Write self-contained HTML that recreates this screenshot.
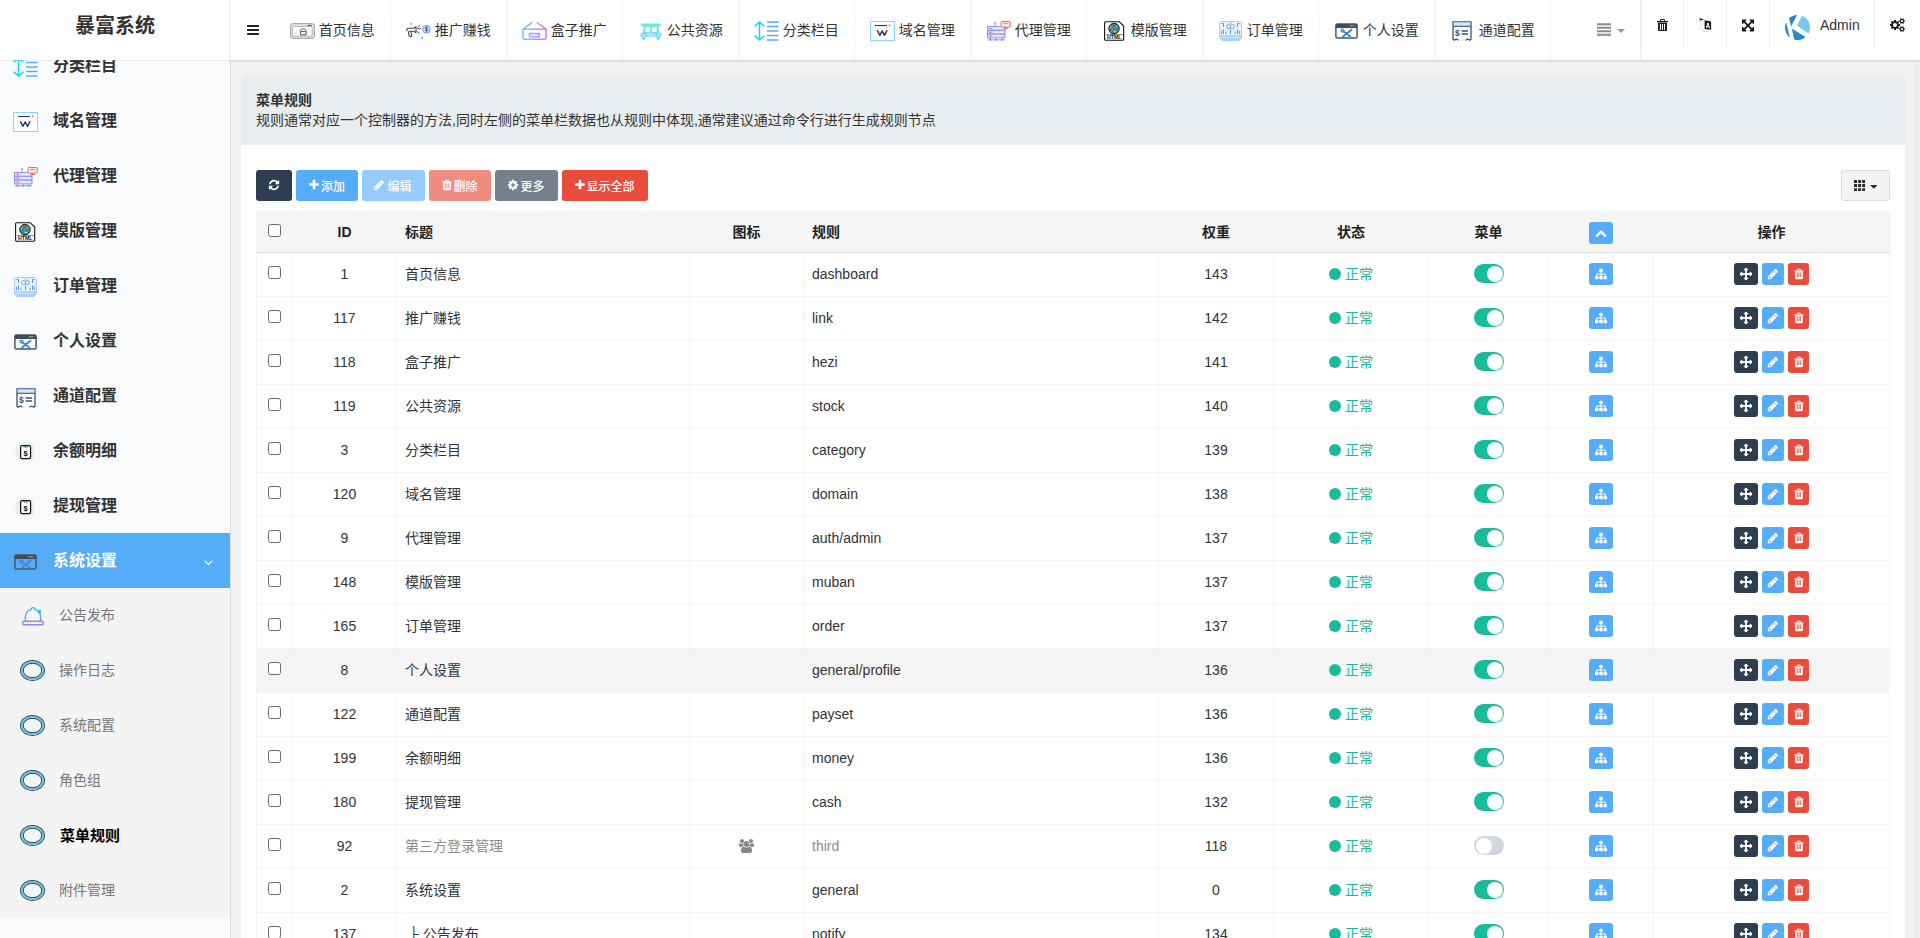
<!DOCTYPE html>
<html lang="zh-CN">
<head>
<meta charset="utf-8">
<title>暴富系统</title>
<style>
*{box-sizing:border-box;margin:0;padding:0}
html,body{width:1920px;height:938px;overflow:hidden}
body{font-family:"Liberation Sans","Noto Sans CJK SC",sans-serif;font-size:14px;color:#333;background:#f2f2f2;position:relative}
svg{display:block}
/* header */
#hd{position:absolute;left:0;top:0;width:1920px;height:60px;background:#fff;z-index:10}
#hdsh{position:absolute;left:230px;top:0;width:1690px;height:60px;box-shadow:0 1px 2px rgba(0,0,0,.16);z-index:9;background:#fff}
#hdl{position:absolute;left:0;top:60px;width:230px;height:1px;background:rgba(0,0,0,.05);z-index:11}
#logo{position:absolute;left:0;top:0;width:230px;height:60px;text-align:center;font-size:20px;font-weight:bold;line-height:52px;color:#333}
#hd .vl{position:absolute;top:0;width:1px;background:#eee}
#admin{position:absolute;left:1820px;top:16px;font-size:14px;line-height:18px;color:#333}
#burger{position:absolute;left:246px;top:23px;fill:#222}
.nv{position:absolute;top:0;height:60px;width:116px;border-right:1px solid #f0f0f0;color:#333;font-size:14px;line-height:60px}
.nv span{position:absolute;left:43.8px;top:0;white-space:nowrap}
.nv svg{position:absolute}
/* sidebar */
#sb{position:absolute;left:0;top:60px;width:231px;height:878px;background:#f9fafc;border-right:1px solid #d9dce3;overflow:hidden}
.mi{position:absolute;left:0;width:230px;height:55px;font-size:16px;font-weight:bold;color:#333;line-height:55px}
.mi span{position:absolute;left:53px;top:0;white-space:nowrap}
.mi svg{position:absolute}
.mi.act{background:#55acf8;color:#fff}
#sub{position:absolute;left:0;top:528px;width:230px;height:330px;background:#f4f4f5}
.si{position:absolute;left:0;width:230px;height:55px;font-size:14px;color:#777;line-height:55px}
.si span{position:absolute;left:59px;top:0;white-space:nowrap}
.si svg{position:absolute}
.si.cur{color:#000;font-weight:bold;font-size:15px}
.si.cur span{left:60px}
/* content */
#panel{position:absolute;left:241px;top:75px;width:1664px;height:900px;background:#fff;border-radius:3px 3px 0 0}
#ph{position:absolute;left:0;top:0;width:1664px;height:70px;background:#e8edf0;border-radius:3px 3px 0 0}
#ph b{position:absolute;left:15px;top:17px;font-size:14px;line-height:16px;color:#333}
#ph p{position:absolute;left:15px;top:37px;font-size:14px;line-height:16px;color:#333;white-space:nowrap}
.btn{position:absolute;top:95px;height:31px;border-radius:3px;color:#fff;font-size:12px;line-height:31px;white-space:nowrap}
.btn svg{position:absolute}
.btn span{position:absolute;top:1.5px;margin-left:-.5px;font-weight:500}
#colbtn{position:absolute;left:1600px;top:95px;width:49px;height:31px;border:1px solid #ddd;border-radius:3px;background:#f4f4f4}
#colbtn svg{position:absolute}
#scroll{position:absolute;left:1915px;top:60px;width:5px;height:878px;background:#e9edf2}
/* table */
#tb{position:absolute;left:15px;top:136px;width:1634px;border-collapse:separate;border-spacing:0;table-layout:fixed;font-size:14px;color:#333;border-left:1px solid #f1f1f1;line-height:20px}
#tb th{height:42px;background:#f5f5f5;border-right:1px solid #f0f0f0;border-bottom:1px solid #ddd;font-weight:bold;color:#222;text-align:center;padding:0 8px;vertical-align:middle}
#tb td{height:44px;border-right:1px solid #f4f4f4;border-bottom:1px solid #f4f4f4;padding:0 8px 1px;vertical-align:middle;white-space:nowrap;overflow:hidden}
#tb .c{text-align:center}
#tb .t{text-align:left}
#tb tr.hover td{background:#f5f5f5}
#tb tr.muted td.t{color:#8c8c8c}
.cb{display:block;width:13px;height:13px;border:1px solid #6b6b6b;border-radius:2.5px;background:#fff;margin:0 auto;position:relative;top:-1.5px}
th .cb{top:-1px}
.st{color:#18bc9c;display:flex;justify-content:center;align-items:center;height:20px;white-space:nowrap}
.st i{display:block;width:12px;height:12px;border-radius:50%;background:#18bc9c;margin-right:4px}
.sw{display:block;width:30px;height:19px;border-radius:9.5px;position:relative;margin:0 auto;top:-.5px;left:.5px}
.sw.on{background:#18bc9c}
.sw.off{background:#d2d6de}
.sw i{position:absolute;top:1.5px;width:16px;height:16px;border-radius:50%;background:#fff}
.sw.on i{right:1.5px}
.sw.off i{left:1.5px}
.bxs{display:flex;justify-content:center;gap:4px;height:22px}
.bx{display:block;height:22px;border-radius:3px;position:relative}
.bx svg{position:absolute;left:50%;top:50%;transform:translate(-50%,-50%);fill:#fff}
.bx-blue{background:#55acf8}
.bx-dark{background:#2c3e50}
.bx-red{background:#e74c3c}
th .bxs{position:relative;top:1.5px}
.fa{display:block;margin:0 auto;fill:#878787}
</style>
</head>
<body>
<svg width="0" height="0" style="position:absolute">
<defs>
<symbol id="h-lang" viewBox="0 0 13 14"><path d="M.7 0l4.2 1.5L.7 2.700z" fill="#2a2018"/><rect x="-.4" y="3.1" width="5.9" height="8.6" fill="#fdfcff" stroke="#d9d3ef" stroke-width=".6"/><path d="M1.6 6.6c1 .6 2 .2 2.6-1M2.9 4.700v1M1.7 8.500l2 1.3" stroke="#d5cfe6" stroke-width=".6" fill="none"/><path d="M5.7 2.200l6.4 1.200v8.400l-6.4-.8z" fill="#15151f"/><path d="M7.3 9.900l1.6-5.1 1.6 5.500M7.8 8.500l2.4.4" stroke="#fff" stroke-width="1" fill="none"/><path d="M3 13.300h5.600l.9-.8" stroke="#c8c8c8" stroke-width=".7" fill="none"/></symbol>
<symbol id="h-trash" viewBox="0 0 11 12.5"><path fill-rule="evenodd" d="M3.6 0h3.8l.9 1.9H11v1.3H0V1.9h2.7zM4.2 1l-.4.9h3.4L6.8 1zM1 3.8h9v7.3a1.4 1.4 0 0 1-1.4 1.4H2.4A1.4 1.4 0 0 1 1 11.1zM2.9 5v6h1.1V5zM4.95 5v6h1.1V5zM7 5v6h1.1V5z"/></symbol>
<symbol id="fa-arrows" viewBox="0 0 1792 1792"><path d="M1792 896q0 26-19 45l-256 256q-19 19-45 19t-45-19-19-45v-128h-384v384h128q26 0 45 19t19 45-19 45l-256 256q-19 19-45 19t-45-19l-256-256q-19-19-19-45t19-45 45-19h128v-384h-384v128q0 26-19 45t-45 19-45-19l-256-256q-19-19-19-45t19-45l256-256q19-19 45-19t45 19 19 45v128h384v-384h-128q-26 0-45-19t-19-45 19-45l256-256q19-19 45-19t45 19l256 256q19 19 19 45t-19 45-45 19h-128v384h384v-128q0-26 19-45t45-19 45 19l256 256q19 19 19 45z"/></symbol>
<symbol id="fa-pencil" viewBox="0 0 1792 1792"><path d="M491 1536l91-91-235-235-91 91v107h128v128h107zm523-928q0-22-22-22-10 0-17 7l-542 542q-7 7-7 17 0 22 22 22 10 0 17-7l542-542q7-7 7-17zm-54-192l416 416-832 832h-416v-416zm683 96q0 53-37 90l-166 166-416-416 166-165q36-38 90-38 53 0 91 38l235 234q37 39 37 91z"/></symbol>
<symbol id="fa-trash" viewBox="0 0 1792 1792"><path d="M704 1376v-704q0-14-9-23t-23-9h-64q-14 0-23 9t-9 23v704q0 14 9 23t23 9h64q14 0 23-9t9-23zm256 0v-704q0-14-9-23t-23-9h-64q-14 0-23 9t-9 23v704q0 14 9 23t23 9h64q14 0 23-9t9-23zm256 0v-704q0-14-9-23t-23-9h-64q-14 0-23 9t-9 23v704q0 14 9 23t23 9h64q14 0 23-9t9-23zm-544-992h448l-48-117q-7-9-17-11h-317q-10 2-17 11zm928 32v64q0 14-9 23t-23 9h-96v948q0 83-47 143.500t-113 60.500h-832q-66 0-113-58.500t-47-141.500v-952h-96q-14 0-23-9t-9-23v-64q0-14 9-23t23-9h309l70-167q15-37 54-63t79-26h320q40 0 79 26t54 63l70 167h309q14 0 23 9t9 23z"/></symbol>
<symbol id="fa-refresh" viewBox="0 0 1792 1792"><path d="M1639 1056q0 5-1 7-64 268-268 434.500t-478 166.500q-146 0-282.500-55t-243.500-157l-129 129q-19 19-45 19t-45-19-19-45v-448q0-26 19-45t45-19h448q26 0 45 19t19 45-19 45l-137 137q71 66 161 102t187 36q134 0 250-65t186-179q11-17 53-117 8-23 30-23h192q13 0 22.500 9.500t9.500 22.500zm25-800v448q0 26-19 45t-45 19h-448q-26 0-45-19t-19-45 19-45l138-138q-148-137-349-137-134 0-250 65t-186 179q-11 17-53 117-8 23-30 23h-199q-13 0-22.500-9.500t-9.500-22.500v-7q65-268 270-434.500t480-166.500q146 0 284 55.500t245 156.500l130-129q19-19 45-19t45 19 19 45z"/></symbol>
<symbol id="fa-plus" viewBox="0 0 1792 1792"><path d="M1600 736v192q0 40-28 68t-68 28h-416v416q0 40-28 68t-68 28h-192q-40 0-68-28t-28-68v-416h-416q-40 0-68-28t-28-68v-192q0-40 28-68t68-28h416v-416q0-40 28-68t68-28h192q40 0 68 28t28 68v416h416q40 0 68 28t28 68z"/></symbol>
<symbol id="fa-cog" viewBox="0 0 1792 1792"><path d="M1152 896q0-106-75-181t-181-75-181 75-75 181 75 181 181 75 181-75 75-181zm512-109v222q0 12-8 23t-20 13l-185 28q-19 54-39 91 35 50 107 138 10 12 10 25t-9 23q-27 37-99 108t-94 71q-12 0-26-9l-138-108q-44 23-91 38-16 136-29 186-7 28-36 28h-222q-14 0-24.500-8.500t-11.500-21.500l-28-184q-49-16-90-37l-141 107q-10 9-25 9-14 0-25-11-126-114-165-168-7-10-7-23 0-12 8-23 15-21 51-66.500t54-70.500q-27-50-41-99l-183-27q-13-2-21-12.500t-8-23.500v-222q0-12 8-23t19-13l186-28q14-46 39-92-40-57-107-138-10-12-10-24 0-10 9-23 26-36 98.500-107.500t94.500-71.500q13 0 26 10l138 107q44-23 91-38 16-136 29-186 7-28 36-28h222q14 0 24.500 8.500t11.500 21.500l28 184q49 16 90 37l142-107q9-9 24-9 13 0 25 10 129 119 165 170 7 8 7 22 0 12-8 23-15 21-51 66.500t-54 70.500q26 50 41 98l183 28q13 2 21 12.500t8 23.500z"/></symbol>
<symbol id="fa-chevron-up" viewBox="0 0 1792 1792"><path d="M1683 1331l-166 165q-19 19-45 19t-45-19l-531-531-531 531q-19 19-45 19t-45-19l-166-165q-19-19-19-45.500t19-45.500l742-741q19-19 45-19t45 19l742 741q19 19 19 45.500t-19 45.500z"/></symbol>
<symbol id="fa-arrows-alt" viewBox="0 0 1792 1792"><path d="M1283 595l-355 355 355 355 144-144q29-31 70-14 39 17 39 59v448q0 26-19 45t-45 19h-448q-42 0-59-40-17-39 14-69l144-144-355-355-355 355 144 144q31 30 14 69-17 40-59 40h-448q-26 0-45-19t-19-45v-448q0-42 40-59 39-17 69 14l144 144 355-355-355-355-144 144q-19 19-45 19-12 0-24-5-40-17-40-59v-448q0-26 19-45t45-19h448q42 0 59 40 17 39-14 69l-144 144 355 355 355-355-144-144q-31-30-14-69 17-40 59-40h448q26 0 45 19t19 45v448q0 42-39 59-13 5-25 5-26 0-45-19z"/></symbol>
<symbol id="fa-cogs" viewBox="0 0 1920 1792"><path d="M896 896q0-106-75-181t-181-75-181 75-75 181 75 181 181 75 181-75 75-181zm768 512q0-52-38-90t-90-38-90 38-38 90q0 53 37.500 90.500t90.500 37.500 90.500-37.500 37.500-90.500zm0-1024q0-52-38-90t-90-38-90 38-38 90q0 53 37.500 90.500t90.500 37.500 90.500-37.500 37.500-90.500zm-384 421v185q0 10-7 19.500t-16 10.500l-155 24q-11 35-32 76 34 48 90 115 7 11 7 20 0 12-7 19-23 30-82.500 89.500t-78.500 59.500q-11 0-21-7l-115-90q-37 19-77 31-11 108-23 155-7 24-30 24h-186q-11 0-20-7.500t-10-17.500l-23-153q-34-10-75-31l-118 89q-7 7-20 7-11 0-21-8-144-133-144-160 0-9 7-19 10-14 41-53t47-61q-23-44-35-82l-152-24q-10-1-17-9.500t-7-19.500v-185q0-10 7-19.500t16-10.500l155-24q11-35 32-76-34-48-90-115-7-11-7-20 0-12 7-20 22-30 82-89t79-59q11 0 21 7l115 90q34-18 77-32 11-108 23-154 7-24 30-24h186q11 0 20 7.500t10 17.500l23 153q34 10 75 31l118-89q8-7 20-7 11 0 21 8 144 133 144 160 0 8-7 19-12 16-42 54t-45 60q23 48 34 82l152 23q10 2 17 10.500t7 19.500zm640 533v140q0 16-149 31-12 27-30 52 51 113 51 138 0 4-4 7-122 71-124 71-8 0-46-47t-52-68q-20 2-30 2t-30-2q-14 21-52 68t-46 47q-2 0-124-71-4-3-4-7 0-25 51-138-18-25-30-52-149-15-149-31v-140q0-16 149-31 13-29 30-52-51-113-51-138 0-4 4-7 4-2 35-20t59-34 30-16q8 0 46 46.500t52 67.500q20-2 30-2t30 2q51-71 92-112l6-2q4 0 124 70 4 3 4 7 0 25-51 138 17 23 30 52 149 15 149 31zm0-1024v140q0 16-149 31-12 27-30 52 51 113 51 138 0 4-4 7-122 71-124 71-8 0-46-47t-52-68q-20 2-30 2t-30-2q-14 21-52 68t-46 47q-2 0-124-71-4-3-4-7 0-25 51-138-18-25-30-52-149-15-149-31v-140q0-16 149-31 13-29 30-52-51-113-51-138 0-4 4-7 4-2 35-20t59-34 30-16q8 0 46 46.500t52 67.500q20-2 30-2t30 2q51-71 92-112l6-2q4 0 124 70 4 3 4 7 0 25-51 138 17 23 30 52 149 15 149 31z"/></symbol>
<symbol id="fa-sitemap" viewBox="0 0 1792 1792"><path d="M1792 1248v320q0 40-28 68t-68 28h-320q-40 0-68-28t-28-68v-320q0-40 28-68t68-28h96v-192h-512v192h96q40 0 68 28t28 68v320q0 40-28 68t-68 28h-320q-40 0-68-28t-28-68v-320q0-40 28-68t68-28h96v-192h-512v192h96q40 0 68 28t28 68v320q0 40-28 68t-68 28h-320q-40 0-68-28t-28-68v-320q0-40 28-68t68-28h96v-192q0-52 38-90t90-38h512v-192h-96q-40 0-68-28t-28-68v-320q0-40 28-68t68-28h320q40 0 68 28t28 68v320q0 40-28 68t-68 28h-96v192h512q52 0 90 38t38 90v192h96q40 0 68 28t28 68z"/></symbol>
<symbol id="fa-users" viewBox="0 0 1920 1792"><path d="M593 896q-162 5-265 128h-134q-82 0-138-40.500t-56-118.500q0-353 124-353 6 0 43.500 21t97.500 42.500 119 21.500q67 0 133-23-5 37-5 66 0 139 81 256zm1071 637q0 120-73 189.500t-194 69.500h-874q-121 0-194-69.500t-73-189.500q0-53 3.500-103.500t14-109 26.500-108.500 43-97.500 62-81 85.500-53.500 111.500-20q10 0 43 21.500t73 48 107 48 135 21.500 135-21.500 107-48 73-48 43-21.500q61 0 111.500 20t85.500 53.500 62 81 43 97.500 26.500 108.500 14 109 3.500 103.500zm-1024-1277q0 106-75 181t-181 75-181-75-75-181 75-181 181-75 181 75 75 181zm704 384q0 159-112.500 271.500t-271.500 112.500-271.500-112.500-112.500-271.500 112.500-271.500 271.500-112.500 271.500 112.500 112.500 271.500zm576 225q0 78-56 118.500t-138 40.500h-134q-103-123-265-128 81-117 81-256 0-29-5-66 66 23 133 23 59 0 119-21.500t97.500-42.500 43.500-21q124 0 124 353zm-128-609q0 106-75 181t-181 75-181-75-75-181 75-181 181-75 181 75 75 181z"/></symbol>
<symbol id="fa-th" viewBox="0 0 1792 1792"><path d="M512 1248v192q0 40-28 68t-68 28h-320q-40 0-68-28t-28-68v-192q0-40 28-68t68-28h320q40 0 68 28t28 68zm0-512v192q0 40-28 68t-68 28h-320q-40 0-68-28t-28-68v-192q0-40 28-68t68-28h320q40 0 68 28t28 68zm640 512v192q0 40-28 68t-68 28h-320q-40 0-68-28t-28-68v-192q0-40 28-68t68-28h320q40 0 68 28t28 68zm-640-1024v192q0 40-28 68t-68 28h-320q-40 0-68-28t-28-68v-192q0-40 28-68t68-28h320q40 0 68 28t28 68zm640 512v192q0 40-28 68t-68 28h-320q-40 0-68-28t-28-68v-192q0-40 28-68t68-28h320q40 0 68 28t28 68zm640 512v192q0 40-28 68t-68 28h-320q-40 0-68-28t-28-68v-192q0-40 28-68t68-28h320q40 0 68 28t28 68zm-640-1024v192q0 40-28 68t-68 28h-320q-40 0-68-28t-28-68v-192q0-40 28-68t68-28h320q40 0 68 28t28 68zm640 512v192q0 40-28 68t-68 28h-320q-40 0-68-28t-28-68v-192q0-40 28-68t68-28h320q40 0 68 28t28 68zm0-512v192q0 40-28 68t-68 28h-320q-40 0-68-28t-28-68v-192q0-40 28-68t68-28h320q40 0 68 28t28 68z"/></symbol>
<symbol id="fa-bars" viewBox="0 0 1792 1792"><path d="M1664 1344v128q0 26-19 45t-45 19h-1408q-26 0-45-19t-19-45v-128q0-26 19-45t45-19h1408q26 0 45 19t19 45zm0-512v128q0 26-19 45t-45 19h-1408q-26 0-45-19t-19-45v-128q0-26 19-45t45-19h1408q26 0 45 19t19 45zm0-512v128q0 26-19 45t-45 19h-1408q-26 0-45-19t-19-45v-128q0-26 19-45t45-19h1408q26 0 45 19t19 45z"/></symbol>
<symbol id="fa-angle-down" viewBox="0 0 1792 1792"><path d="M1395 736q0 13-10 23l-466 466q-10 10-23 10t-23-10l-466-466q-10-10-10-23t10-23l50-50q10-10 23-10t23 10l393 393 393-393q10-10 23-10t23 10l50 50q10 10 10 23z"/></symbol>
<symbol id="fa-caret-down" viewBox="0 0 1792 1792"><path d="M1408 704q0 26-19 45l-448 448q-19 19-45 19t-45-19l-448-448q-19-19-19-45t19-45 45-19h896q26 0 45 19t19 45z"/></symbol>

<symbol id="n-home" viewBox="0 0 25 16"><rect x=".6" y=".7" width="23.8" height="14.6" rx="2.4" fill="#ececec" stroke="#8c8c8c" stroke-width=".9"/><rect x="2.6" y="3.3" width="19.6" height="9.9" rx="1.2" fill="#fff" stroke="#9a9a9a" stroke-width=".8"/><path d="M17.5 2.4h4.5" stroke="#555" stroke-width="1"/><path d="M10.4 8.4v3.4h5.8V8.4z" fill="#eee" stroke="#555" stroke-width="1"/><path d="M9.3 8.1c1.2-2.4 5.6-3.4 7.6-.4" fill="none" stroke="#666" stroke-width=".9"/><path d="M5.2 10.2l1.6-1.2M17.8 5.4l2.2 1.4" stroke="#aaa" stroke-width=".6"/></symbol>
<symbol id="n-promo" viewBox="0 0 26 18"><path d="M3.2 9.3h4.3l2.5 1.3V4.7L7.5 6.3H2.4C.7 6.3.4 8 1.2 9.1" fill="none" stroke="#3d454d" stroke-width="1.1" stroke-linejoin="round"/><path d="M2.6 9.2c-.3 2.2.4 4.6 1.7 5.3h1.3c.5-1.5-.7-3.5-.8-5.3" fill="none" stroke="#3d454d" stroke-width="1.1"/><path d="M11.3 5.5l2.4-2.1M11.3 6.7H15M11.3 9.3l2.4 2.2" stroke="#3d454d" stroke-width="1" fill="none"/><circle cx="20.4" cy="7.2" r="4.3" fill="#70a7ff"/><circle cx="20.4" cy="7.2" r="3" fill="#c4d9fb"/><path d="M21.5 5.8c-.8-.7-2.2-.4-2.1.5.1 1.1 2.3.6 2.3 1.8 0 .9-1.5 1.1-2.4.3M20.5 4.7v5" stroke="#3a4560" stroke-width=".8" fill="none"/><circle cx="5.3" cy="1.8" r="1" fill="#7db2ff"/><circle cx="16.1" cy="16" r="1" fill="#6ea3fa"/></symbol>
<symbol id="n-box" viewBox="0 0 25 18"><defs><linearGradient id="gbox" gradientUnits="userSpaceOnUse" x1="1" x2="24" y1="0" y2="0"><stop offset="0" stop-color="#7cc6ff"/><stop offset="1" stop-color="#dc7cf7"/></linearGradient></defs><path d="M1 7.2h23v8.6a1.5 1.5 0 0 1-1.5 1.5h-20a1.5 1.5 0 0 1-1.5-1.5zM1 7.2L9.5.8M24 7.2L15.5.8" fill="none" stroke="url(#gbox)" stroke-width="1.6" stroke-linecap="round" stroke-linejoin="round"/><rect x="7.5" y="11.6" width="10" height="3" rx=".6" fill="none" stroke="url(#gbox)" stroke-width="1.6"/></symbol>
<symbol id="n-bus" viewBox="0 0 22 17"><defs><linearGradient id="gbus" x1="0" x2="0" y1="0" y2="1"><stop offset="0" stop-color="#62ecd6"/><stop offset="1" stop-color="#5cc8f2"/></linearGradient></defs><rect x="1.2" y=".5" width="19.6" height="2.8" rx="1.4" fill="#62ecd6"/><path d="M3.2 3h15.6v7.5H3.2z" fill="url(#gbus)" opacity=".85"/><rect x="5.3" y="4.4" width="4.8" height="4.4" fill="#fff"/><rect x="11.9" y="4.4" width="4.8" height="4.4" fill="#fff"/><rect x=".5" y="9.6" width="21" height="4.4" rx="1.6" fill="#8edcf3"/><rect x="7" y="9.8" width="8" height="3.8" fill="#a9e6f7"/><circle cx="3.7" cy="12" r="2" fill="#eafaff" stroke="#5cc8f2" stroke-width=".9"/><circle cx="18.3" cy="12" r="2" fill="#eafaff" stroke="#5cc8f2" stroke-width=".9"/><circle cx="3.7" cy="12" r=".7" fill="#5cc8f2"/><circle cx="18.3" cy="12" r=".7" fill="#5cc8f2"/><rect x="2.2" y="14.2" width="3" height="2.3" rx=".8" fill="#5cc8f2"/><rect x="16.8" y="14.2" width="3" height="2.3" rx=".8" fill="#5cc8f2"/></symbol>
<symbol id="n-cat" viewBox="0 0 26 20"><path d="M6.5 1.4v17.2M2 4.8L6.5 1.1 11 4.8M2 15.2l4.5 3.7 4.5-3.7" fill="none" stroke="#1fd3f3" stroke-width="1.5" stroke-linecap="round" stroke-linejoin="round"/><path d="M14 1h11.5M14 5.5h11.5M14 10h11.5M14 14.5h11.5M14 19h11.5" stroke="#4fb0ff" stroke-width="1.3"/></symbol>
<symbol id="n-domain" viewBox="0 0 25 20"><rect x=".5" y=".5" width="24" height="19" fill="#fff" stroke="#8ad6fb" stroke-width="1"/><path d="M5 4.5h12" stroke="#1f3a5c" stroke-width="1"/><circle cx="19.6" cy="4.4" r=".8" fill="#f0506e"/><path d="M7.6 9.7l2.2 4.6 2.4-4.3 2.4 4.3 2.2-4.6" fill="none" stroke="#1f3a5c" stroke-width="1.5" stroke-linejoin="round" stroke-linecap="round"/></symbol>
<symbol id="n-agent" viewBox="0 0 25 20"><path d="M9 1.5v4M3 5.8h3" stroke="#8084ec" stroke-width=".8"/><circle cx="9" cy="1.8" r=".8" fill="#8084ec"/><rect x="1.5" y="5.5" width="17.5" height="3.8" fill="#d9dbfb" stroke="#8084ec" stroke-width=".8"/><rect x="1.5" y="9.3" width="17.5" height="3.8" fill="#d9dbfb" stroke="#8084ec" stroke-width=".8"/><rect x="1.5" y="13.1" width="17.5" height="3.8" fill="#d9dbfb" stroke="#8084ec" stroke-width=".8"/><path d="M3.5 7.4h2M3.5 11.2h2M3.5 15h2" stroke="#e25555" stroke-width="1"/><path d="M8 7.4h9M8 11.2h9M8 15h9" stroke="#f4f4ff" stroke-width="1.2"/><path d="M4.5 17v1.6M10.2 17v1.6M16 17v1.6M2 18.8h17" stroke="#8084ec" stroke-width=".8"/><circle cx="4.5" cy="18.8" r=".9" fill="#8084ec"/><circle cx="10.2" cy="18.8" r=".9" fill="#8084ec"/><circle cx="16" cy="18.8" r=".9" fill="#8084ec"/><rect x="15" y=".5" width="9.3" height="5.6" rx=".8" fill="#fdecec" stroke="#e06464" stroke-width=".9"/><path d="M17 2.4h5.4" stroke="#e06464" stroke-width=".8"/><path d="M17.6 7.5h4.2M19.7 6.1v1.4" stroke="#e06464" stroke-width=".9"/></symbol>
<symbol id="n-html" viewBox="0 0 21 20"><path d="M1.8.7h13.4l4.5 4.3v13.1a1.2 1.2 0 0 1-1.2 1.2H1.8A1.2 1.2 0 0 1 .6 18.1V1.9A1.2 1.2 0 0 1 1.8.7z" fill="#fff" stroke="#111" stroke-width="1.1"/><circle cx="10" cy="7.6" r="5.3" fill="#3b8fe8" stroke="#111" stroke-width=".9"/><path d="M5.3 6.6c.8-2.2 2.8-3 4.4-2.4-.2 1.4-1.2 1.8-2.2 1.8.6 1.2 0 2.4-1.4 2.6-.6-.4-.9-1.2-.8-2zM11.4 3.9c1.8.2 3 1.6 3.3 3-1.2.6-2.4.2-2.8-.8-1 .2-1.6-.6-.5-2.2zM8.4 10c.8-1.4 2.6-1.6 3.6-.6 1 .2 1.4.8 1.2 1.6-1.4 1.4-3.6 1.6-4.8-1z" fill="#b9d63a" stroke="#111" stroke-width=".5"/><text x="10.2" y="18" font-family="Liberation Sans,sans-serif" font-size="5.2" font-weight="bold" text-anchor="middle" fill="#111">HTML</text><path d="M2 13.6h17" stroke="#111" stroke-width=".5"/></symbol>
<symbol id="n-order" viewBox="0 0 23 20"><path d="M2.4.5h18.2a1.9 1.9 0 0 1 1.9 1.9v14.2l-2.3 2.9H2.8L.5 16.6V2.4A1.9 1.9 0 0 1 2.4.5z" fill="#eaf4ff" stroke="#a3cffa" stroke-width="1"/><path d="M.8 14h21.4v2.6l-2.2 2.6H3l-2.2-2.6z" fill="#a9d2fb"/><path d="M3 16.2h17" stroke="#d4e9fe" stroke-width="1"/><path d="M2.5 2.5h2v3.5M4.5 8.5v4.5M2.6 9.5v3.5M20.5 2.5h-2v3.5M18.5 8.5v4.5M20.4 9.5v3.5M11.5 8.5v4.5M7 10.5v2.5M16 10.5v2.5" stroke="#4a96f0" stroke-width="1" fill="none"/><circle cx="9.6" cy="5.6" r="2" fill="#fff" stroke="#4a96f0" stroke-width=".9"/><circle cx="13.4" cy="5.6" r="2" fill="#fff" stroke="#4a96f0" stroke-width=".9"/><path d="M10.5 2.2h.8M12 2.2h.8" stroke="#4a96f0" stroke-width=".8"/></symbol>
<symbol id="n-set" viewBox="0 0 23 16"><rect x=".9" y=".9" width="21.2" height="14.2" rx="1.6" fill="none" stroke="#4b5563" stroke-width="1.5"/><path d="M.9 5V2.5A1.6 1.6 0 0 1 2.5.9h18a1.6 1.6 0 0 1 1.6 1.6V5z" fill="#414a56"/><path d="M14.5 2.8h5" stroke="#aab2bd" stroke-width=".9"/><path d="M8 8l7.4 5.6M15.6 7.6l-7.6 6" stroke="#3f86d9" stroke-width="1.9" stroke-linecap="round"/><circle cx="7.4" cy="7.6" r="1.5" fill="none" stroke="#3f86d9" stroke-width="1.2"/><path d="M14.2 8.6l2.6-2.2" stroke="#3f86d9" stroke-width="1.4" stroke-linecap="round"/></symbol>
<symbol id="n-pay" viewBox="0 0 20 20"><path d="M1 .8h18v17.4l-1.3.9-2.2-1.1-1.5 1H6l-1.5-1-2.2 1.1L1 18.2z" fill="#fff" stroke="#33517f" stroke-width="1.3" stroke-linejoin="round"/><rect x="1.7" y="1.5" width="16.6" height="3.3" fill="#cfe6fb"/><path d="M1 5.3h18" stroke="#33517f" stroke-width="1.1"/><path d="M6.3 19h7.4" stroke="#fff" stroke-width="1.8"/><text x="3" y="14.6" font-family="Liberation Sans,sans-serif" font-size="8.5" font-weight="bold" fill="#33517f">$</text><path d="M9.6 9.9h6.4M9.6 12.9h6.4" stroke="#33517f" stroke-width="1.5"/></symbol>
<symbol id="n-money" viewBox="0 0 20 20"><circle cx="10" cy="9.8" r="9.8" fill="#eeeeee"/><rect x="5.6" y="3.6" width="10" height="13" rx="1.6" fill="#fbfbf7" stroke="#111" stroke-width="1.2"/><path d="M8.3 4.2h4.6v.6a.8.8 0 0 1-.8.8H9.1a.8.8 0 0 1-.8-.8z" fill="#1f9d55"/><text x="10.6" y="13.8" font-family="Liberation Sans,sans-serif" font-size="7.5" font-weight="bold" text-anchor="middle" fill="#111">$</text><circle cx="17.9" cy="2.8" r=".5" fill="#9ab"/><circle cx="17.9" cy="16.9" r=".5" fill="#9ab"/></symbol>
<symbol id="n-bell" viewBox="0 0 22 20"><defs><linearGradient id="gbell" gradientUnits="userSpaceOnUse" x1="0" x2="0" y1="1" y2="19"><stop offset="0" stop-color="#38b6f6"/><stop offset="1" stop-color="#8e8be0"/></linearGradient></defs><path d="M3.4 15.2V11a7.6 7.6 0 0 1 5.6-7.4 2 2 0 0 1 4 0A7.6 7.6 0 0 1 18.6 11v4.2" fill="none" stroke="url(#gbell)" stroke-width="1.4"/><rect x=".8" y="15.2" width="20.4" height="3.6" rx="1.2" fill="#eef0ff" stroke="url(#gbell)" stroke-width="1.4"/><circle cx="17.3" cy="5.6" r="1.8" fill="#2fb3f5"/></symbol>
<symbol id="n-ring" viewBox="0 0 25 21"><ellipse cx="12.5" cy="10.5" rx="10.6" ry="8.6" fill="none" stroke="#1b2a33" stroke-width="3.6"/><ellipse cx="12.5" cy="10.5" rx="10.6" ry="8.6" fill="none" stroke="#6ec6ea" stroke-width="2.2"/></symbol>

</defs>
</svg>

<div id="hdsh"></div><div id="hdl"></div>
<div id="hd">
  <div id="logo">暴富系统</div>
  <div class="vl" style="left:229px;height:60px"></div>
  <svg id="burger" width="14" height="14" viewBox="0 0 1792 1792"><use href="#fa-bars"/></svg>
  <div class="nv" style="left:275px"><svg width="25" height="16" viewBox="0 0 25 16" style="left:15px;top:22.5px"><use href="#n-home"/></svg><span>首页信息</span></div>
<div class="nv" style="left:391px"><svg width="26" height="18" viewBox="0 0 26 18" style="left:15px;top:22px"><use href="#n-promo"/></svg><span>推广赚钱</span></div>
<div class="nv" style="left:507px"><svg width="25" height="18" viewBox="0 0 25 18" style="left:15px;top:22px"><use href="#n-box"/></svg><span>盒子推广</span></div>
<div class="nv" style="left:623px"><svg width="22" height="17" viewBox="0 0 22 17" style="left:17px;top:22.6px"><use href="#n-bus"/></svg><span>公共资源</span></div>
<div class="nv" style="left:739px"><svg width="26" height="20" viewBox="0 0 26 20" style="left:14px;top:21px"><use href="#n-cat"/></svg><span>分类栏目</span></div>
<div class="nv" style="left:855px"><svg width="25" height="20" viewBox="0 0 25 20" style="left:15px;top:20.8px"><use href="#n-domain"/></svg><span>域名管理</span></div>
<div class="nv" style="left:971px"><svg width="25" height="20" viewBox="0 0 25 20" style="left:15px;top:20.8px"><use href="#n-agent"/></svg><span>代理管理</span></div>
<div class="nv" style="left:1087px"><svg width="21" height="20" viewBox="0 0 21 20" style="left:17px;top:20.8px"><use href="#n-html"/></svg><span>模版管理</span></div>
<div class="nv" style="left:1203px"><svg width="23" height="20" viewBox="0 0 23 20" style="left:16px;top:20.8px"><use href="#n-order"/></svg><span>订单管理</span></div>
<div class="nv" style="left:1319px"><svg width="23" height="16" viewBox="0 0 23 16" style="left:16px;top:22.8px"><use href="#n-set"/></svg><span>个人设置</span></div>
<div class="nv" style="left:1435px"><svg width="20" height="20" viewBox="0 0 20 20" style="left:17px;top:20.8px"><use href="#n-pay"/></svg><span>通道配置</span></div>

  <svg style="position:absolute;left:1597px;top:23px" width="14" height="13" viewBox="0 0 14 13"><path d="M0 .2h14v2.1H0zM0 3.8h14v1.9H0zM0 7.3h14v1.9H0zM0 10.8h14v2H0z" fill="#8c8c8c"/></svg>
  <svg style="position:absolute;left:1617px;top:29px" width="8" height="4" viewBox="0 0 8 4"><path d="M0 0h8L4 4z" fill="#999"/></svg>
  <div class="vl" style="left:1640px;height:60px"></div>
  <div class="vl" style="left:1641px;height:50px"></div>
  <div class="vl" style="left:1683px;height:50px"></div>
  <div class="vl" style="left:1726px;height:50px"></div>
  <div class="vl" style="left:1769px;height:50px"></div>
  <div class="vl" style="left:1874px;height:50px"></div>
  <svg style="position:absolute;left:1657px;top:18.7px;fill:#1a1a1a" width="11" height="12.5" viewBox="0 0 11 12.5"><use href="#h-trash"/></svg>
  <svg style="position:absolute;left:1699px;top:18px" width="13" height="14" viewBox="0 0 13 14"><use href="#h-lang"/></svg>
  <svg style="position:absolute;left:1742px;top:17.6px;fill:#1a1a1a" width="14" height="14" viewBox="0 0 1792 1792"><use href="#fa-arrows-alt"/></svg>
  <svg style="position:absolute;left:1785px;top:15px" width="25" height="25" viewBox="0 0 25 25"><defs><clipPath id="av"><circle cx="12.5" cy="12.5" r="12.6"/></clipPath></defs><circle cx="12.5" cy="12.5" r="12.5" fill="#fff"/><g clip-path="url(#av)"><path d="M-1 7.2L1.3 8l3.4 14L2 25z" fill="#2b87cf"/><path d="M4 3.4L3-1h9.5L6.2 11.5z" fill="#2b87cf"/><path d="M11.8 10.6L17.2.4 26-1v21l-2.5-1.6z" fill="#76cbec"/><path d="M6.9 13.6l13.3 8.1L18 27H9.6z" fill="#2b87cf"/></g></svg>
  <div id="admin">Admin</div>
  <svg style="position:absolute;left:1890px;top:18px;fill:#1a1a1a" width="15" height="14" viewBox="0 0 1920 1792"><use href="#fa-cogs"/></svg>

</div>

<div id="sb">
  <div class="mi" style="top:-22px"><svg width="26" height="20" viewBox="0 0 26 20" style="left:12px;top:18.5px"><use href="#n-cat"/></svg><span>分类栏目</span></div>
<div class="mi" style="top:33px"><svg width="25" height="20" viewBox="0 0 25 20" style="left:13px;top:18.5px"><use href="#n-domain"/></svg><span>域名管理</span></div>
<div class="mi" style="top:88px"><svg width="25" height="20" viewBox="0 0 25 20" style="left:13px;top:18.5px"><use href="#n-agent"/></svg><span>代理管理</span></div>
<div class="mi" style="top:143px"><svg width="21" height="20" viewBox="0 0 21 20" style="left:15px;top:19px"><use href="#n-html"/></svg><span>模版管理</span></div>
<div class="mi" style="top:198px"><svg width="23" height="20" viewBox="0 0 23 20" style="left:14px;top:19px"><use href="#n-order"/></svg><span>订单管理</span></div>
<div class="mi" style="top:253px"><svg width="23" height="16" viewBox="0 0 23 16" style="left:14px;top:21px"><use href="#n-set"/></svg><span>个人设置</span></div>
<div class="mi" style="top:308px"><svg width="20" height="20" viewBox="0 0 20 20" style="left:16px;top:20px"><use href="#n-pay"/></svg><span>通道配置</span></div>
<div class="mi" style="top:363px"><svg width="20" height="20" viewBox="0 0 20 20" style="left:15px;top:18.7px"><use href="#n-money"/></svg><span>余额明细</span></div>
<div class="mi" style="top:418px"><svg width="20" height="20" viewBox="0 0 20 20" style="left:15px;top:18.7px"><use href="#n-money"/></svg><span>提现管理</span></div>
<div class="mi act" style="top:473px"><svg width="23" height="16" viewBox="0 0 23 16" style="left:14px;top:21px"><use href="#n-set"/></svg><span>系统设置</span><svg width="15" height="15" viewBox="0 0 1792 1792" style="left:200.7px;top:21.5px;fill:#fff"><use href="#fa-angle-down"/></svg></div>
<div id="sub">
<div class="si" style="top:0px"><svg width="22" height="20" viewBox="0 0 22 20" style="left:22px;top:18px"><use href="#n-bell"/></svg><span>公告发布</span></div>
<div class="si" style="top:55px"><svg width="25" height="21" viewBox="0 0 25 21" style="left:20px;top:17px"><use href="#n-ring"/></svg><span>操作日志</span></div>
<div class="si" style="top:110px"><svg width="25" height="21" viewBox="0 0 25 21" style="left:20px;top:17px"><use href="#n-ring"/></svg><span>系统配置</span></div>
<div class="si" style="top:165px"><svg width="25" height="21" viewBox="0 0 25 21" style="left:20px;top:17px"><use href="#n-ring"/></svg><span>角色组</span></div>
<div class="si cur" style="top:220px"><svg width="25" height="21" viewBox="0 0 25 21" style="left:20px;top:17px"><use href="#n-ring"/></svg><span>菜单规则</span></div>
<div class="si" style="top:275px"><svg width="25" height="21" viewBox="0 0 25 21" style="left:20px;top:17px"><use href="#n-ring"/></svg><span>附件管理</span></div>
</div>

</div>

<div id="panel">
  <div id="ph"><b>菜单规则</b><p>规则通常对应一个控制器的方法,同时左侧的菜单栏数据也从规则中体现,通常建议通过命令行进行生成规则节点</p></div>
  
  <div class="btn" style="left:15px;width:36px;background:#2c3e50"><svg width="12" height="12" viewBox="0 0 1792 1792" style="left:11.9px;top:9px;fill:#fff"><use href="#fa-refresh"/></svg></div>
  <div class="btn" style="left:55px;width:62px;background:#55acf8"><svg width="12" height="12" viewBox="0 0 1792 1792" style="left:11.7px;top:9px;fill:#fff"><use href="#fa-plus"/></svg><span style="left:25.5px">添加</span></div>
  <div class="btn" style="left:121px;width:63px;background:#94cbfb"><svg width="12" height="12" viewBox="0 0 1792 1792" style="left:11.3px;top:9px;fill:#fff"><use href="#fa-pencil"/></svg><span style="left:26px">编辑</span></div>
  <div class="btn" style="left:188px;width:62px;background:#ef8d82"><svg width="12" height="12" viewBox="0 0 1792 1792" style="left:11.6px;top:9px;fill:#fff"><use href="#fa-trash"/></svg><span style="left:25px">删除</span></div>
  <div class="btn" style="left:254px;width:63px;background:#75808d"><svg width="12" height="12" viewBox="0 0 1792 1792" style="left:11.9px;top:9px;fill:#fff"><use href="#fa-cog"/></svg><span style="left:26px">更多</span></div>
  <div class="btn" style="left:321px;width:86px;background:#e74c3c"><svg width="12" height="12" viewBox="0 0 1792 1792" style="left:11.5px;top:9px;fill:#fff"><use href="#fa-plus"/></svg><span style="left:25px">显示全部</span></div>
  <div id="colbtn"><svg width="11.25" height="11.25" viewBox="0 0 11.25 11.25" style="left:11.75px;top:9px"><path d="M0 0h3v3H0zM4.1 0h3v3h-3zM8.2 0h3v3h-3zM0 4.1h3v3H0zM4.1 4.1h3v3h-3zM8.2 4.1h3v3h-3zM0 8.2h3v3H0zM4.1 8.2h3v3h-3zM8.2 8.2h3v3h-3z" fill="#2a2a2a"/></svg><svg width="7.6" height="3.8" viewBox="0 0 8 4" style="left:27.5px;top:14px"><path d="M0 0h8L4 4z" fill="#2a2a2a"/></svg></div>
  <table id="tb">
  <colgroup><col style="width:36px"><col style="width:104px"><col style="width:293px"><col style="width:114px"><col style="width:355px"><col style="width:115px"><col style="width:155px"><col style="width:120px"><col style="width:105px"><col style="width:236px"></colgroup>
  <thead><tr><th><span class="cb"></span></th><th>ID</th><th style="text-align:left">标题</th><th>图标</th><th style="text-align:left">规则</th><th>权重</th><th>状态</th><th>菜单</th><th><div class="bxs"><span class="bx bx-blue" style="width:24px"><svg width="12" height="12" viewBox="0 0 1792 1792"><use href="#fa-chevron-up"/></svg></span></div></th><th>操作</th></tr></thead>
  <tbody>
<tr class=""><td class="c"><span class="cb"></span></td><td class="c">1</td><td class="t">首页信息</td><td class="c"></td><td class="t">dashboard</td><td class="c">143</td><td class="c"><span class="st"><i></i>正常</span></td><td class="c"><span class="sw on"><i></i></span></td><td class="c"><div class="bxs"><span class="bx bx-blue" style="width:24px"><svg width="12" height="12" viewBox="0 0 1792 1792"><use href="#fa-sitemap"/></svg></span></div></td><td class="c ops"><div class="bxs"><span class="bx bx-dark" style="width:24px"><svg width="13" height="13" viewBox="0 0 1792 1792"><use href="#fa-arrows"/></svg></span><span class="bx bx-blue" style="width:22px"><svg width="12" height="12" viewBox="0 0 1792 1792"><use href="#fa-pencil"/></svg></span><span class="bx bx-red" style="width:21px"><svg width="12" height="12" viewBox="0 0 1792 1792"><use href="#fa-trash"/></svg></span></div></td></tr>
<tr class=""><td class="c"><span class="cb"></span></td><td class="c">117</td><td class="t">推广赚钱</td><td class="c"></td><td class="t">link</td><td class="c">142</td><td class="c"><span class="st"><i></i>正常</span></td><td class="c"><span class="sw on"><i></i></span></td><td class="c"><div class="bxs"><span class="bx bx-blue" style="width:24px"><svg width="12" height="12" viewBox="0 0 1792 1792"><use href="#fa-sitemap"/></svg></span></div></td><td class="c ops"><div class="bxs"><span class="bx bx-dark" style="width:24px"><svg width="13" height="13" viewBox="0 0 1792 1792"><use href="#fa-arrows"/></svg></span><span class="bx bx-blue" style="width:22px"><svg width="12" height="12" viewBox="0 0 1792 1792"><use href="#fa-pencil"/></svg></span><span class="bx bx-red" style="width:21px"><svg width="12" height="12" viewBox="0 0 1792 1792"><use href="#fa-trash"/></svg></span></div></td></tr>
<tr class=""><td class="c"><span class="cb"></span></td><td class="c">118</td><td class="t">盒子推广</td><td class="c"></td><td class="t">hezi</td><td class="c">141</td><td class="c"><span class="st"><i></i>正常</span></td><td class="c"><span class="sw on"><i></i></span></td><td class="c"><div class="bxs"><span class="bx bx-blue" style="width:24px"><svg width="12" height="12" viewBox="0 0 1792 1792"><use href="#fa-sitemap"/></svg></span></div></td><td class="c ops"><div class="bxs"><span class="bx bx-dark" style="width:24px"><svg width="13" height="13" viewBox="0 0 1792 1792"><use href="#fa-arrows"/></svg></span><span class="bx bx-blue" style="width:22px"><svg width="12" height="12" viewBox="0 0 1792 1792"><use href="#fa-pencil"/></svg></span><span class="bx bx-red" style="width:21px"><svg width="12" height="12" viewBox="0 0 1792 1792"><use href="#fa-trash"/></svg></span></div></td></tr>
<tr class=""><td class="c"><span class="cb"></span></td><td class="c">119</td><td class="t">公共资源</td><td class="c"></td><td class="t">stock</td><td class="c">140</td><td class="c"><span class="st"><i></i>正常</span></td><td class="c"><span class="sw on"><i></i></span></td><td class="c"><div class="bxs"><span class="bx bx-blue" style="width:24px"><svg width="12" height="12" viewBox="0 0 1792 1792"><use href="#fa-sitemap"/></svg></span></div></td><td class="c ops"><div class="bxs"><span class="bx bx-dark" style="width:24px"><svg width="13" height="13" viewBox="0 0 1792 1792"><use href="#fa-arrows"/></svg></span><span class="bx bx-blue" style="width:22px"><svg width="12" height="12" viewBox="0 0 1792 1792"><use href="#fa-pencil"/></svg></span><span class="bx bx-red" style="width:21px"><svg width="12" height="12" viewBox="0 0 1792 1792"><use href="#fa-trash"/></svg></span></div></td></tr>
<tr class=""><td class="c"><span class="cb"></span></td><td class="c">3</td><td class="t">分类栏目</td><td class="c"></td><td class="t">category</td><td class="c">139</td><td class="c"><span class="st"><i></i>正常</span></td><td class="c"><span class="sw on"><i></i></span></td><td class="c"><div class="bxs"><span class="bx bx-blue" style="width:24px"><svg width="12" height="12" viewBox="0 0 1792 1792"><use href="#fa-sitemap"/></svg></span></div></td><td class="c ops"><div class="bxs"><span class="bx bx-dark" style="width:24px"><svg width="13" height="13" viewBox="0 0 1792 1792"><use href="#fa-arrows"/></svg></span><span class="bx bx-blue" style="width:22px"><svg width="12" height="12" viewBox="0 0 1792 1792"><use href="#fa-pencil"/></svg></span><span class="bx bx-red" style="width:21px"><svg width="12" height="12" viewBox="0 0 1792 1792"><use href="#fa-trash"/></svg></span></div></td></tr>
<tr class=""><td class="c"><span class="cb"></span></td><td class="c">120</td><td class="t">域名管理</td><td class="c"></td><td class="t">domain</td><td class="c">138</td><td class="c"><span class="st"><i></i>正常</span></td><td class="c"><span class="sw on"><i></i></span></td><td class="c"><div class="bxs"><span class="bx bx-blue" style="width:24px"><svg width="12" height="12" viewBox="0 0 1792 1792"><use href="#fa-sitemap"/></svg></span></div></td><td class="c ops"><div class="bxs"><span class="bx bx-dark" style="width:24px"><svg width="13" height="13" viewBox="0 0 1792 1792"><use href="#fa-arrows"/></svg></span><span class="bx bx-blue" style="width:22px"><svg width="12" height="12" viewBox="0 0 1792 1792"><use href="#fa-pencil"/></svg></span><span class="bx bx-red" style="width:21px"><svg width="12" height="12" viewBox="0 0 1792 1792"><use href="#fa-trash"/></svg></span></div></td></tr>
<tr class=""><td class="c"><span class="cb"></span></td><td class="c">9</td><td class="t">代理管理</td><td class="c"></td><td class="t">auth/admin</td><td class="c">137</td><td class="c"><span class="st"><i></i>正常</span></td><td class="c"><span class="sw on"><i></i></span></td><td class="c"><div class="bxs"><span class="bx bx-blue" style="width:24px"><svg width="12" height="12" viewBox="0 0 1792 1792"><use href="#fa-sitemap"/></svg></span></div></td><td class="c ops"><div class="bxs"><span class="bx bx-dark" style="width:24px"><svg width="13" height="13" viewBox="0 0 1792 1792"><use href="#fa-arrows"/></svg></span><span class="bx bx-blue" style="width:22px"><svg width="12" height="12" viewBox="0 0 1792 1792"><use href="#fa-pencil"/></svg></span><span class="bx bx-red" style="width:21px"><svg width="12" height="12" viewBox="0 0 1792 1792"><use href="#fa-trash"/></svg></span></div></td></tr>
<tr class=""><td class="c"><span class="cb"></span></td><td class="c">148</td><td class="t">模版管理</td><td class="c"></td><td class="t">muban</td><td class="c">137</td><td class="c"><span class="st"><i></i>正常</span></td><td class="c"><span class="sw on"><i></i></span></td><td class="c"><div class="bxs"><span class="bx bx-blue" style="width:24px"><svg width="12" height="12" viewBox="0 0 1792 1792"><use href="#fa-sitemap"/></svg></span></div></td><td class="c ops"><div class="bxs"><span class="bx bx-dark" style="width:24px"><svg width="13" height="13" viewBox="0 0 1792 1792"><use href="#fa-arrows"/></svg></span><span class="bx bx-blue" style="width:22px"><svg width="12" height="12" viewBox="0 0 1792 1792"><use href="#fa-pencil"/></svg></span><span class="bx bx-red" style="width:21px"><svg width="12" height="12" viewBox="0 0 1792 1792"><use href="#fa-trash"/></svg></span></div></td></tr>
<tr class=""><td class="c"><span class="cb"></span></td><td class="c">165</td><td class="t">订单管理</td><td class="c"></td><td class="t">order</td><td class="c">137</td><td class="c"><span class="st"><i></i>正常</span></td><td class="c"><span class="sw on"><i></i></span></td><td class="c"><div class="bxs"><span class="bx bx-blue" style="width:24px"><svg width="12" height="12" viewBox="0 0 1792 1792"><use href="#fa-sitemap"/></svg></span></div></td><td class="c ops"><div class="bxs"><span class="bx bx-dark" style="width:24px"><svg width="13" height="13" viewBox="0 0 1792 1792"><use href="#fa-arrows"/></svg></span><span class="bx bx-blue" style="width:22px"><svg width="12" height="12" viewBox="0 0 1792 1792"><use href="#fa-pencil"/></svg></span><span class="bx bx-red" style="width:21px"><svg width="12" height="12" viewBox="0 0 1792 1792"><use href="#fa-trash"/></svg></span></div></td></tr>
<tr class="hover"><td class="c"><span class="cb"></span></td><td class="c">8</td><td class="t">个人设置</td><td class="c"></td><td class="t">general/profile</td><td class="c">136</td><td class="c"><span class="st"><i></i>正常</span></td><td class="c"><span class="sw on"><i></i></span></td><td class="c"><div class="bxs"><span class="bx bx-blue" style="width:24px"><svg width="12" height="12" viewBox="0 0 1792 1792"><use href="#fa-sitemap"/></svg></span></div></td><td class="c ops"><div class="bxs"><span class="bx bx-dark" style="width:24px"><svg width="13" height="13" viewBox="0 0 1792 1792"><use href="#fa-arrows"/></svg></span><span class="bx bx-blue" style="width:22px"><svg width="12" height="12" viewBox="0 0 1792 1792"><use href="#fa-pencil"/></svg></span><span class="bx bx-red" style="width:21px"><svg width="12" height="12" viewBox="0 0 1792 1792"><use href="#fa-trash"/></svg></span></div></td></tr>
<tr class=""><td class="c"><span class="cb"></span></td><td class="c">122</td><td class="t">通道配置</td><td class="c"></td><td class="t">payset</td><td class="c">136</td><td class="c"><span class="st"><i></i>正常</span></td><td class="c"><span class="sw on"><i></i></span></td><td class="c"><div class="bxs"><span class="bx bx-blue" style="width:24px"><svg width="12" height="12" viewBox="0 0 1792 1792"><use href="#fa-sitemap"/></svg></span></div></td><td class="c ops"><div class="bxs"><span class="bx bx-dark" style="width:24px"><svg width="13" height="13" viewBox="0 0 1792 1792"><use href="#fa-arrows"/></svg></span><span class="bx bx-blue" style="width:22px"><svg width="12" height="12" viewBox="0 0 1792 1792"><use href="#fa-pencil"/></svg></span><span class="bx bx-red" style="width:21px"><svg width="12" height="12" viewBox="0 0 1792 1792"><use href="#fa-trash"/></svg></span></div></td></tr>
<tr class=""><td class="c"><span class="cb"></span></td><td class="c">199</td><td class="t">余额明细</td><td class="c"></td><td class="t">money</td><td class="c">136</td><td class="c"><span class="st"><i></i>正常</span></td><td class="c"><span class="sw on"><i></i></span></td><td class="c"><div class="bxs"><span class="bx bx-blue" style="width:24px"><svg width="12" height="12" viewBox="0 0 1792 1792"><use href="#fa-sitemap"/></svg></span></div></td><td class="c ops"><div class="bxs"><span class="bx bx-dark" style="width:24px"><svg width="13" height="13" viewBox="0 0 1792 1792"><use href="#fa-arrows"/></svg></span><span class="bx bx-blue" style="width:22px"><svg width="12" height="12" viewBox="0 0 1792 1792"><use href="#fa-pencil"/></svg></span><span class="bx bx-red" style="width:21px"><svg width="12" height="12" viewBox="0 0 1792 1792"><use href="#fa-trash"/></svg></span></div></td></tr>
<tr class=""><td class="c"><span class="cb"></span></td><td class="c">180</td><td class="t">提现管理</td><td class="c"></td><td class="t">cash</td><td class="c">132</td><td class="c"><span class="st"><i></i>正常</span></td><td class="c"><span class="sw on"><i></i></span></td><td class="c"><div class="bxs"><span class="bx bx-blue" style="width:24px"><svg width="12" height="12" viewBox="0 0 1792 1792"><use href="#fa-sitemap"/></svg></span></div></td><td class="c ops"><div class="bxs"><span class="bx bx-dark" style="width:24px"><svg width="13" height="13" viewBox="0 0 1792 1792"><use href="#fa-arrows"/></svg></span><span class="bx bx-blue" style="width:22px"><svg width="12" height="12" viewBox="0 0 1792 1792"><use href="#fa-pencil"/></svg></span><span class="bx bx-red" style="width:21px"><svg width="12" height="12" viewBox="0 0 1792 1792"><use href="#fa-trash"/></svg></span></div></td></tr>
<tr class="muted"><td class="c"><span class="cb"></span></td><td class="c">92</td><td class="t">第三方登录管理</td><td class="c"><svg class="fa" width="15" height="14" viewBox="0 0 1920 1792"><use href="#fa-users"/></svg></td><td class="t">third</td><td class="c">118</td><td class="c"><span class="st"><i></i>正常</span></td><td class="c"><span class="sw off"><i></i></span></td><td class="c"><div class="bxs"><span class="bx bx-blue" style="width:24px"><svg width="12" height="12" viewBox="0 0 1792 1792"><use href="#fa-sitemap"/></svg></span></div></td><td class="c ops"><div class="bxs"><span class="bx bx-dark" style="width:24px"><svg width="13" height="13" viewBox="0 0 1792 1792"><use href="#fa-arrows"/></svg></span><span class="bx bx-blue" style="width:22px"><svg width="12" height="12" viewBox="0 0 1792 1792"><use href="#fa-pencil"/></svg></span><span class="bx bx-red" style="width:21px"><svg width="12" height="12" viewBox="0 0 1792 1792"><use href="#fa-trash"/></svg></span></div></td></tr>
<tr class=""><td class="c"><span class="cb"></span></td><td class="c">2</td><td class="t">系统设置</td><td class="c"></td><td class="t">general</td><td class="c">0</td><td class="c"><span class="st"><i></i>正常</span></td><td class="c"><span class="sw on"><i></i></span></td><td class="c"><div class="bxs"><span class="bx bx-blue" style="width:24px"><svg width="12" height="12" viewBox="0 0 1792 1792"><use href="#fa-sitemap"/></svg></span></div></td><td class="c ops"><div class="bxs"><span class="bx bx-dark" style="width:24px"><svg width="13" height="13" viewBox="0 0 1792 1792"><use href="#fa-arrows"/></svg></span><span class="bx bx-blue" style="width:22px"><svg width="12" height="12" viewBox="0 0 1792 1792"><use href="#fa-pencil"/></svg></span><span class="bx bx-red" style="width:21px"><svg width="12" height="12" viewBox="0 0 1792 1792"><use href="#fa-trash"/></svg></span></div></td></tr>
<tr class=""><td class="c"><span class="cb"></span></td><td class="c">137</td><td class="t">&nbsp;├ 公告发布</td><td class="c"></td><td class="t">notify</td><td class="c">134</td><td class="c"><span class="st"><i></i>正常</span></td><td class="c"><span class="sw on"><i></i></span></td><td class="c"><div class="bxs"><span class="bx bx-blue" style="width:24px"><svg width="12" height="12" viewBox="0 0 1792 1792"><use href="#fa-sitemap"/></svg></span></div></td><td class="c ops"><div class="bxs"><span class="bx bx-dark" style="width:24px"><svg width="13" height="13" viewBox="0 0 1792 1792"><use href="#fa-arrows"/></svg></span><span class="bx bx-blue" style="width:22px"><svg width="12" height="12" viewBox="0 0 1792 1792"><use href="#fa-pencil"/></svg></span><span class="bx bx-red" style="width:21px"><svg width="12" height="12" viewBox="0 0 1792 1792"><use href="#fa-trash"/></svg></span></div></td></tr>
  </tbody>
  </table>
</div>
<div id="scroll"></div>
</body>
</html>
